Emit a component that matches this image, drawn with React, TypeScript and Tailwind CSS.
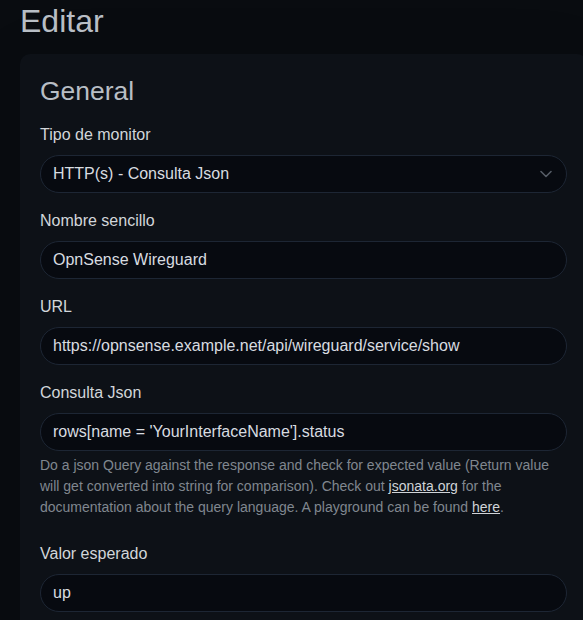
import React from "react";

const inputCls =
  "block w-full h-[38px] rounded-full border border-[#1d2634] bg-[#070a10] px-[12px] text-[16px] leading-[24px] text-[#d8dce0] outline-none";

function Label({ children }: { children: React.ReactNode }) {
  return <label className="block mb-2 text-[16px] leading-[24px] text-[#d2d6da]">{children}</label>;
}

export default function App() {
  return (
    <div
      className="w-[583px] h-[620px] overflow-hidden bg-[#090c10] px-5"
      style={{ fontFamily: '"Liberation Sans", Arial, sans-serif' }}
    >
      <h1 className="pt-[2px] text-[32px] leading-[1.2] mb-[14px] text-[#b8bec5] font-normal">Editar</h1>
      <div className="w-[567px] rounded-[10px] bg-[#0d1117] px-5 pt-[22px] pb-5 shadow-[0_15px_70px_rgba(0,0,0,0.1)]">
        <h2 className="text-[26.45px] leading-[1.2] mb-[15px] text-[#b8bec5] font-normal">General</h2>

        <div>
          <Label>Tipo de monitor</Label>
          <div className="relative">
            <div className={inputCls + " flex items-center"}>HTTP(s) - Consulta Json</div>
            <svg
              className="absolute right-[15px] top-1/2 -translate-y-1/2"
              width="12"
              height="8"
              viewBox="0 0 12 8"
              fill="none"
            >
              <path d="M1 1.5l5 5 5-5" stroke="#565d66" strokeWidth="1.6" strokeLinecap="round" strokeLinejoin="round" />
            </svg>
          </div>
        </div>

        <div className="mt-4">
          <Label>Nombre sencillo</Label>
          <div className={inputCls + " flex items-center"}>OpnSense Wireguard</div>
        </div>

        <div className="mt-4">
          <Label>URL</Label>
          <div className={inputCls + " flex items-center"}>https://opnsense.example.net/api/wireguard/service/show</div>
        </div>

        <div className="mt-4">
          <Label>Consulta Json</Label>
          <div className={inputCls + " flex items-center"}>rows[name = 'YourInterfaceName'].status</div>
          <div className="mt-1 text-[14px] leading-[21px] text-[#80878f]">
            Do a json Query against the response and check for expected value (Return value will get converted into
            string for comparison). Check out{" "}
            <a className="underline text-[#d0d4d8]">jsonata.org</a> for the documentation about the query language. A
            playground can be found <a className="underline text-[#d0d4d8]">here</a>.
          </div>
        </div>

        <div className="mt-[24px]">
          <Label>Valor esperado</Label>
          <div className={inputCls + " flex items-center"}>up</div>
        </div>
      </div>
    </div>
  );
}
